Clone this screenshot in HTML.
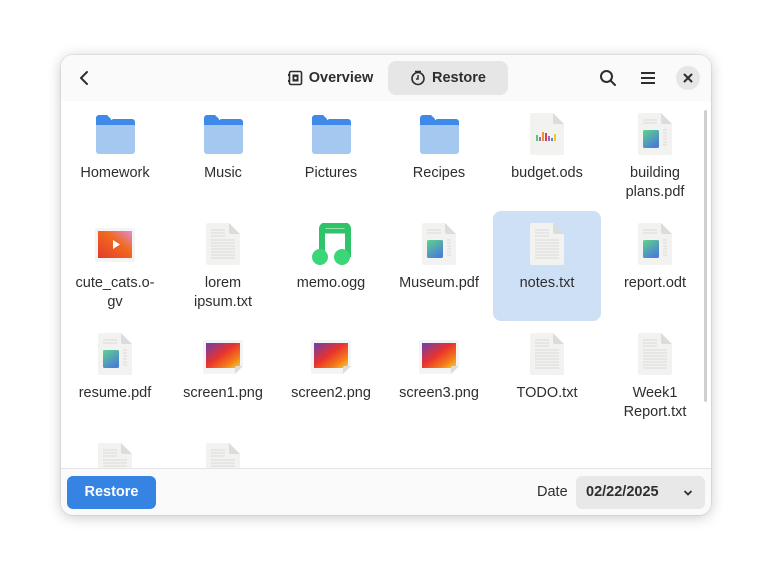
<!DOCTYPE html>
<html><head><meta charset="utf-8"><style>
*{margin:0;padding:0;box-sizing:border-box}
body{width:772px;height:582px;background:#fff;font-family:"Liberation Sans",sans-serif;position:relative;overflow:hidden}
.win{position:absolute;left:61px;top:55px;width:650px;height:460px;background:#fff;border-radius:12px;box-shadow:0 2px 14px rgba(0,0,0,.22),0 0 0 1px rgba(0,0,0,.06);overflow:hidden}
.hdr{position:absolute;left:0;top:0;width:650px;height:46px;background:#fafafa}
.tab{position:absolute;top:6px;height:34px;border-radius:8px;font-weight:bold;font-size:14.5px;color:#2e2e2e;display:flex;align-items:center;justify-content:center;gap:6px}
.grid{position:absolute;left:0;top:46px;width:650px;height:367px;overflow:hidden}
.it{position:absolute;width:108px;height:110px;text-align:center;font-size:14.5px;color:#2e2e2e;line-height:19px;border-radius:8px}
.it svg{position:absolute;left:50%;transform:translateX(-50%)}
.it span{position:absolute;left:0;right:0;top:63px}
.it path[stroke="#d4d4d4"]{stroke:#dedede}
.ftr{position:absolute;left:0;top:413px;width:650px;height:47px;background:#fafafa;border-top:1px solid #e4e4e4}
</style></head><body>
<div class="win">
<div class="hdr">
<svg style="position:absolute;left:17px;top:15px" width="14" height="16" viewBox="0 0 14 16"><path d="M9 2 L3 8 L9 14" stroke="#2e2e2e" stroke-width="2" fill="none" stroke-linecap="round" stroke-linejoin="round"/></svg>
<div class="tab" style="left:210px;width:118px"><svg width="16" height="16" viewBox="0 0 16 16"><rect x="2.5" y="1.5" width="12" height="13" rx="1.5" stroke="#2e2e2e" stroke-width="1.6" fill="none"/><rect x="5.5" y="4.5" width="6" height="7" fill="#2e2e2e"/><circle cx="8.5" cy="8" r="1.3" fill="#fff"/><rect x="1" y="4" width="2" height="2" fill="#2e2e2e"/><rect x="1" y="10" width="2" height="2" fill="#2e2e2e"/></svg>Overview</div>
<div class="tab" style="left:327px;width:120px;background:#e6e6e6"><svg width="16" height="16" viewBox="0 0 16 16"><circle cx="8" cy="8.5" r="6" stroke="#2e2e2e" stroke-width="1.6" fill="none"/><path d="M8 5v4h-2" stroke="#2e2e2e" stroke-width="1.5" fill="none"/><path d="M5 1.5h6" stroke="#2e2e2e" stroke-width="1.5"/></svg>Restore</div>
<svg style="position:absolute;left:538px;top:14px" width="18" height="18" viewBox="0 0 18 18"><circle cx="7.5" cy="7.5" r="5.5" stroke="#2e2e2e" stroke-width="2" fill="none"/><path d="M11.5 11.5 L16 16" stroke="#2e2e2e" stroke-width="2" stroke-linecap="round"/></svg>
<svg style="position:absolute;left:579px;top:15px" width="16" height="16" viewBox="0 0 16 16"><path d="M1 3h14M1 8h14M1 13h14" stroke="#2e2e2e" stroke-width="2"/></svg>
<div style="position:absolute;left:615px;top:11px;width:24px;height:24px;border-radius:12px;background:#e6e6e6"><svg style="position:absolute;left:7px;top:7px" width="10" height="10" viewBox="0 0 10 10"><path d="M1.5 1.5l7 7M8.5 1.5l-7 7" stroke="#2e2e2e" stroke-width="2" stroke-linecap="round"/></svg></div>
</div>
<div class="grid">
<div class="it" style="left:0;top:0"><svg style="top:13px" width="40" height="40" viewBox="0 0 40 40"><path d="M1 10a3 3 0 0 1 3-3h11l3-2h19a3 3 0 0 1 3 3v3H1z" fill="#3f8ae8"/><path d="M1 4a3 3 0 0 1 3-3h8l4 4v6H1z" fill="#3f8ae8"/><path d="M1 11h39v26a3 3 0 0 1-3 3H4a3 3 0 0 1-3-3z" fill="#a4c8ef"/></svg><span>Homework</span></div>
<div class="it" style="left:108px;top:0"><svg style="top:13px" width="40" height="40" viewBox="0 0 40 40"><path d="M1 10a3 3 0 0 1 3-3h11l3-2h19a3 3 0 0 1 3 3v3H1z" fill="#3f8ae8"/><path d="M1 4a3 3 0 0 1 3-3h8l4 4v6H1z" fill="#3f8ae8"/><path d="M1 11h39v26a3 3 0 0 1-3 3H4a3 3 0 0 1-3-3z" fill="#a4c8ef"/></svg><span>Music</span></div>
<div class="it" style="left:216px;top:0"><svg style="top:13px" width="40" height="40" viewBox="0 0 40 40"><path d="M1 10a3 3 0 0 1 3-3h11l3-2h19a3 3 0 0 1 3 3v3H1z" fill="#3f8ae8"/><path d="M1 4a3 3 0 0 1 3-3h8l4 4v6H1z" fill="#3f8ae8"/><path d="M1 11h39v26a3 3 0 0 1-3 3H4a3 3 0 0 1-3-3z" fill="#a4c8ef"/></svg><span>Pictures</span></div>
<div class="it" style="left:324px;top:0"><svg style="top:13px" width="40" height="40" viewBox="0 0 40 40"><path d="M1 10a3 3 0 0 1 3-3h11l3-2h19a3 3 0 0 1 3 3v3H1z" fill="#3f8ae8"/><path d="M1 4a3 3 0 0 1 3-3h8l4 4v6H1z" fill="#3f8ae8"/><path d="M1 11h39v26a3 3 0 0 1-3 3H4a3 3 0 0 1-3-3z" fill="#a4c8ef"/></svg><span>Recipes</span></div>
<div class="it" style="left:432px;top:0"><svg style="top:12px" width="34" height="42" viewBox="0 0 34 42"><path d="M2 0h21l11 11v29a2 2 0 0 1-2 2H2a2 2 0 0 1-2-2V2a2 2 0 0 1 2-2z" fill="#f2f2f1"/><path d="M23 0l11 11H25a2 2 0 0 1-2-2z" fill="#dcdcdc"/><rect x="6" y="22" width="2" height="6" fill="#57c67b"/><rect x="9" y="24" width="2" height="4" fill="#9b6bc3"/><rect x="12" y="19" width="2" height="9" fill="#f0913a"/><rect x="15" y="20" width="2" height="8" fill="#e04040"/><rect x="18" y="23" width="2" height="5" fill="#9b6bc3"/><rect x="21" y="25" width="2" height="3" fill="#4a8ae0"/><rect x="24" y="21" width="2" height="7" fill="#f5c72e"/></svg><span>budget.ods</span></div>
<div class="it" style="left:540px;top:0"><svg style="top:12px" width="34" height="42" viewBox="0 0 34 42"><defs><linearGradient id="g1" x1="0" y1="0" x2="0.6" y2="1"><stop offset="0" stop-color="#5fd38a"/><stop offset="1" stop-color="#4a7fd6"/></linearGradient></defs><path d="M2 0h21l11 11v29a2 2 0 0 1-2 2H2a2 2 0 0 1-2-2V2a2 2 0 0 1 2-2z" fill="#f2f2f1"/><path d="M23 0l11 11H25a2 2 0 0 1-2-2z" fill="#dcdcdc"/><path d="M5 7h14M5 10h14M25 17h4M25 20h4M25 23h4M25 26h4M25 29h4M25 32h4" stroke="#d4d4d4" stroke-width="1.2"/><rect x="5" y="17" width="16" height="18" rx="1.5" fill="url(#g1)"/></svg><span>building<br>plans.pdf</span></div>
<div class="it" style="left:0;top:110px"><svg style="top:17px" width="40" height="34" viewBox="0 0 40 34"><defs><linearGradient id="gv" x1="0" y1="1" x2="1" y2="0"><stop offset="0" stop-color="#e43a2a"/><stop offset=".6" stop-color="#f06a20"/><stop offset="1" stop-color="#e08bd8"/></linearGradient></defs><rect x="0" y="0" width="40" height="34" rx="2" fill="#f4f4f4"/><rect x="3" y="3" width="34" height="27" fill="url(#gv)"/><path d="M18 12v9l7-4.5z" fill="#fff"/></svg><span>cute_cats.o-<br>gv</span></div>
<div class="it" style="left:108px;top:110px"><svg style="top:12px" width="34" height="42" viewBox="0 0 34 42"><path d="M2 0h21l11 11v29a2 2 0 0 1-2 2H2a2 2 0 0 1-2-2V2a2 2 0 0 1 2-2z" fill="#f2f2f1"/><path d="M23 0l11 11H25a2 2 0 0 1-2-2z" fill="#dcdcdc"/><path d="M5 7h14M5 10h14M5 13h14M5 17h24M5 20h24M5 23h24M5 26h24M5 29h24M5 32h24M5 35h24" stroke="#d4d4d4" stroke-width="1.2"/></svg><span>lorem<br>ipsum.txt</span></div>
<div class="it" style="left:216px;top:110px"><svg style="top:12px" width="40" height="44" viewBox="0 0 40 44"><path d="M11 34V6a4 4 0 0 1 4-4h18a4 4 0 0 1 4 4v28" stroke="#2fc36a" stroke-width="6" fill="none"/><path d="M14 8h20" stroke="#2fc36a" stroke-width="5"/><ellipse cx="9" cy="34" rx="8" ry="8" fill="#3bd678"/><ellipse cx="31" cy="34" rx="8" ry="8" fill="#3bd678"/></svg><span>memo.ogg</span></div>
<div class="it" style="left:324px;top:110px"><svg style="top:12px" width="34" height="42" viewBox="0 0 34 42"><path d="M2 0h21l11 11v29a2 2 0 0 1-2 2H2a2 2 0 0 1-2-2V2a2 2 0 0 1 2-2z" fill="#f2f2f1"/><path d="M23 0l11 11H25a2 2 0 0 1-2-2z" fill="#dcdcdc"/><path d="M5 7h14M5 10h14M25 17h4M25 20h4M25 23h4M25 26h4M25 29h4M25 32h4" stroke="#d4d4d4" stroke-width="1.2"/><rect x="5" y="17" width="16" height="18" rx="1.5" fill="url(#g1)"/></svg><span>Museum.pdf</span></div>
<div class="it" style="left:432px;top:110px;background:#cde0f6"><svg style="top:12px" width="34" height="42" viewBox="0 0 34 42"><path d="M2 0h21l11 11v29a2 2 0 0 1-2 2H2a2 2 0 0 1-2-2V2a2 2 0 0 1 2-2z" fill="#f2f2f1"/><path d="M23 0l11 11H25a2 2 0 0 1-2-2z" fill="#dcdcdc"/><path d="M5 7h14M5 10h14M5 13h14M5 17h24M5 20h24M5 23h24M5 26h24M5 29h24M5 32h24M5 35h24" stroke="#d4d4d4" stroke-width="1.2"/></svg><span>notes.txt</span></div>
<div class="it" style="left:540px;top:110px"><svg style="top:12px" width="34" height="42" viewBox="0 0 34 42"><path d="M2 0h21l11 11v29a2 2 0 0 1-2 2H2a2 2 0 0 1-2-2V2a2 2 0 0 1 2-2z" fill="#f2f2f1"/><path d="M23 0l11 11H25a2 2 0 0 1-2-2z" fill="#dcdcdc"/><path d="M5 7h14M5 10h14M25 17h4M25 20h4M25 23h4M25 26h4M25 29h4M25 32h4" stroke="#d4d4d4" stroke-width="1.2"/><rect x="5" y="17" width="16" height="18" rx="1.5" fill="url(#g1)"/></svg><span>report.odt</span></div>
<div class="it" style="left:0;top:220px"><svg style="top:12px" width="34" height="42" viewBox="0 0 34 42"><path d="M2 0h21l11 11v29a2 2 0 0 1-2 2H2a2 2 0 0 1-2-2V2a2 2 0 0 1 2-2z" fill="#f2f2f1"/><path d="M23 0l11 11H25a2 2 0 0 1-2-2z" fill="#dcdcdc"/><path d="M5 7h14M5 10h14M25 17h4M25 20h4M25 23h4M25 26h4M25 29h4M25 32h4" stroke="#d4d4d4" stroke-width="1.2"/><rect x="5" y="17" width="16" height="18" rx="1.5" fill="url(#g1)"/></svg><span>resume.pdf</span></div>
<div class="it" style="left:108px;top:220px"><svg style="top:19px" width="40" height="34" viewBox="0 0 40 34"><defs><linearGradient id="gp" x1="0" y1="0" x2="1" y2="1"><stop offset="0" stop-color="#6a3fb0"/><stop offset=".45" stop-color="#e8322e"/><stop offset=".75" stop-color="#f47a1a"/><stop offset="1" stop-color="#f5d230"/></linearGradient></defs><path d="M0 1a1 1 0 0 1 1-1h38a1 1 0 0 1 1 1v25l-8 8H1a1 1 0 0 1-1-1z" fill="#f4f4f4"/><path d="M3 3h34v25H3z" fill="url(#gp)"/><path d="M32 34l8-8h-6a2 2 0 0 0-2 2z" fill="#dcdcdc"/></svg><span>screen1.png</span></div>
<div class="it" style="left:216px;top:220px"><svg style="top:19px" width="40" height="34" viewBox="0 0 40 34"><path d="M0 1a1 1 0 0 1 1-1h38a1 1 0 0 1 1 1v25l-8 8H1a1 1 0 0 1-1-1z" fill="#f4f4f4"/><path d="M3 3h34v25H3z" fill="url(#gp)"/><path d="M32 34l8-8h-6a2 2 0 0 0-2 2z" fill="#dcdcdc"/></svg><span>screen2.png</span></div>
<div class="it" style="left:324px;top:220px"><svg style="top:19px" width="40" height="34" viewBox="0 0 40 34"><path d="M0 1a1 1 0 0 1 1-1h38a1 1 0 0 1 1 1v25l-8 8H1a1 1 0 0 1-1-1z" fill="#f4f4f4"/><path d="M3 3h34v25H3z" fill="url(#gp)"/><path d="M32 34l8-8h-6a2 2 0 0 0-2 2z" fill="#dcdcdc"/></svg><span>screen3.png</span></div>
<div class="it" style="left:432px;top:220px"><svg style="top:12px" width="34" height="42" viewBox="0 0 34 42"><path d="M2 0h21l11 11v29a2 2 0 0 1-2 2H2a2 2 0 0 1-2-2V2a2 2 0 0 1 2-2z" fill="#f2f2f1"/><path d="M23 0l11 11H25a2 2 0 0 1-2-2z" fill="#dcdcdc"/><path d="M5 7h14M5 10h14M5 13h14M5 17h24M5 20h24M5 23h24M5 26h24M5 29h24M5 32h24M5 35h24" stroke="#d4d4d4" stroke-width="1.2"/></svg><span>TODO.txt</span></div>
<div class="it" style="left:540px;top:220px"><svg style="top:12px" width="34" height="42" viewBox="0 0 34 42"><path d="M2 0h21l11 11v29a2 2 0 0 1-2 2H2a2 2 0 0 1-2-2V2a2 2 0 0 1 2-2z" fill="#f2f2f1"/><path d="M23 0l11 11H25a2 2 0 0 1-2-2z" fill="#dcdcdc"/><path d="M5 7h14M5 10h14M5 13h14M5 17h24M5 20h24M5 23h24M5 26h24M5 29h24M5 32h24M5 35h24" stroke="#d4d4d4" stroke-width="1.2"/></svg><span>Week1<br>Report.txt</span></div>
<div class="it" style="left:0;top:330px"><svg style="top:12px" width="34" height="42" viewBox="0 0 34 42"><path d="M2 0h21l11 11v29a2 2 0 0 1-2 2H2a2 2 0 0 1-2-2V2a2 2 0 0 1 2-2z" fill="#f2f2f1"/><path d="M23 0l11 11H25a2 2 0 0 1-2-2z" fill="#dcdcdc"/><path d="M5 7h14M5 10h14M5 13h14M5 17h24M5 20h24M5 23h24" stroke="#d4d4d4" stroke-width="1.2"/></svg></div>
<div class="it" style="left:108px;top:330px"><svg style="top:12px" width="34" height="42" viewBox="0 0 34 42"><path d="M2 0h21l11 11v29a2 2 0 0 1-2 2H2a2 2 0 0 1-2-2V2a2 2 0 0 1 2-2z" fill="#f2f2f1"/><path d="M23 0l11 11H25a2 2 0 0 1-2-2z" fill="#dcdcdc"/><path d="M5 7h14M5 10h14M5 13h14M5 17h24M5 20h24M5 23h24" stroke="#d4d4d4" stroke-width="1.2"/></svg></div>
<div style="position:absolute;left:643px;top:9px;width:3px;height:292px;border-radius:2px;background:#d0d0d0"></div>
</div>
<div class="ftr">
<div style="position:absolute;left:6px;top:7px;width:89px;height:33px;border-radius:6px;background:#3584e4;color:#fff;font-weight:bold;font-size:14.5px;line-height:33px;text-align:center">Restore</div>
<div style="position:absolute;left:476px;top:7px;line-height:33px;font-size:14.5px;color:#2e2e2e">Date</div>
<div style="position:absolute;left:515px;top:7px;width:129px;height:33px;border-radius:6px;background:#e8e8e8;font-weight:bold;font-size:14.5px;color:#2e2e2e;line-height:33px;padding-left:10px">02/22/2025<svg style="position:absolute;right:12px;top:13px" width="10" height="8" viewBox="0 0 10 8"><path d="M1.5 2l3.5 3.5L8.5 2" stroke="#2e2e2e" stroke-width="1.8" fill="none"/></svg></div>
</div>
</div>
</body></html>
